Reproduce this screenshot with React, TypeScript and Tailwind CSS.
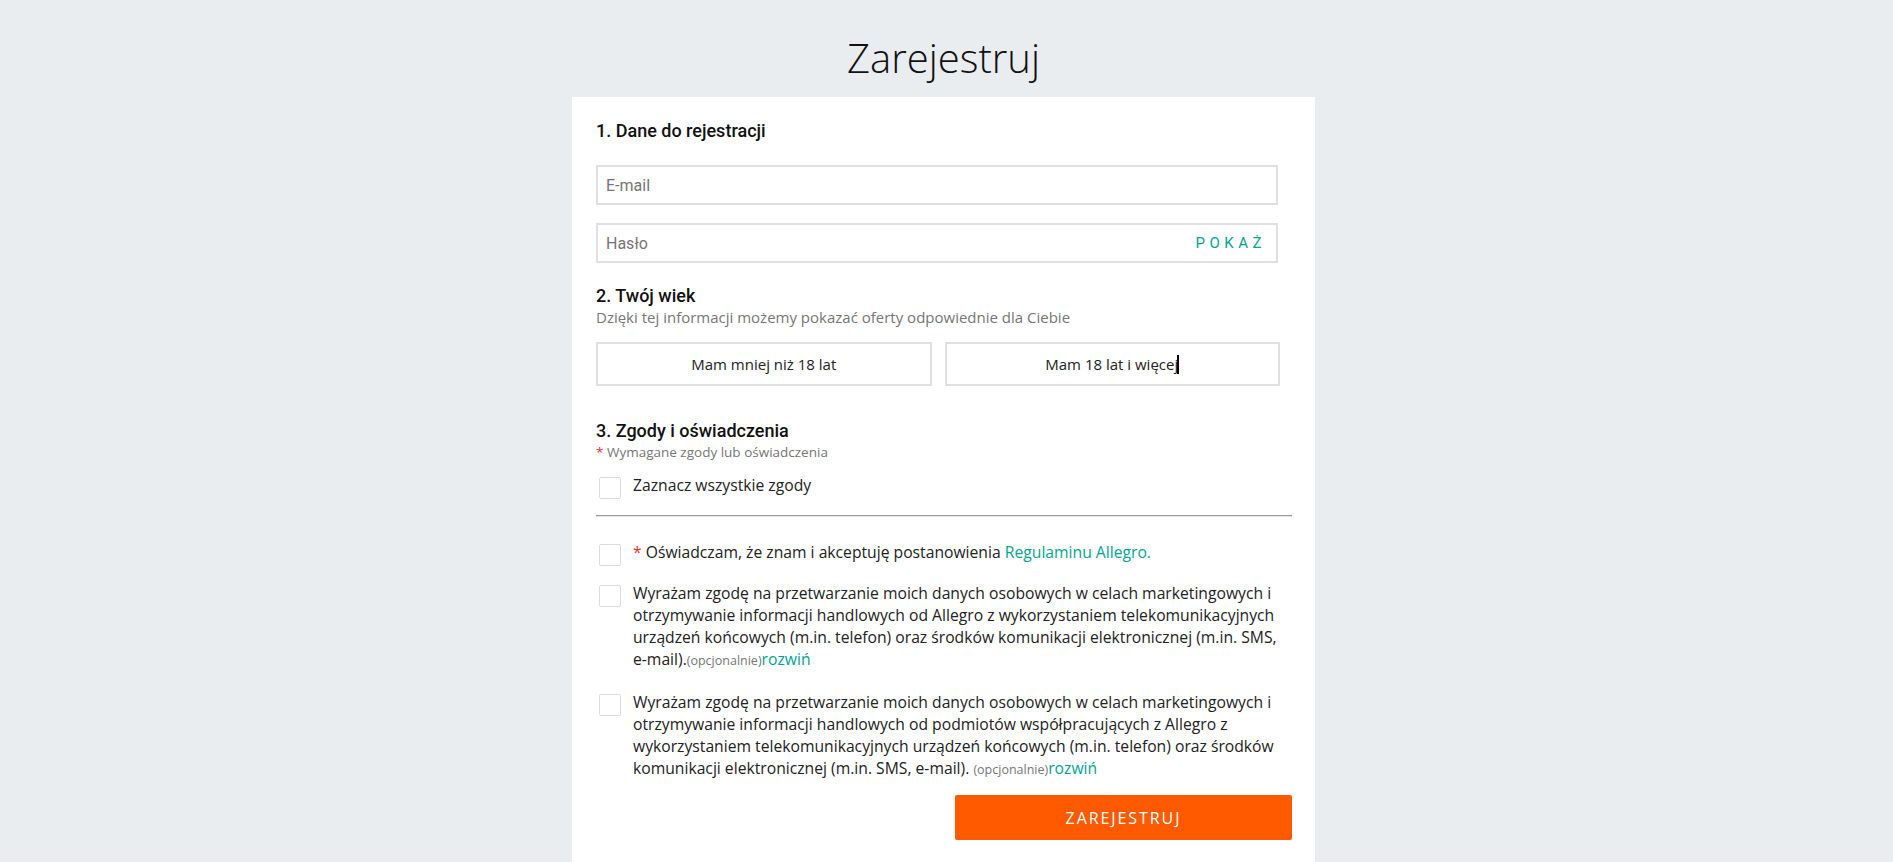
import React from "react";

const teal = "text-[#00a790]";

function Checkbox() {
  return <div className="-mb-[3px] mt-[3px] h-[22px] w-[22px] shrink-0 rounded-[2px] border border-[#dcdcdc] bg-white" />;
}

function ConsentRow({ children }: { children: React.ReactNode }) {
  return (
    <div className="flex items-start pl-[3px]">
      <Checkbox />
      <div className="ml-[12px] text-[15.7px] leading-[22px] text-[#222]">{children}</div>
    </div>
  );
}

export default function App() {
  return (
    <div
      className="min-h-screen bg-[#eaedf0] pr-[6px]"
      style={{ fontFamily: "'Open Sans', 'Noto Sans', sans-serif" }}
    >
      <h1 className="pt-[34px] text-center text-[40px] font-light leading-[48px] text-[#111]">Zarejestruj</h1>
      <div className="mx-auto mt-[15px] w-[743px] bg-white pb-[40px] pl-[24px] pr-[23px] pt-[22px]">
        {/* Section 1 */}
        <h2 className="text-[18px] font-medium leading-[24px] text-[#111]" style={{ fontFamily: "Roboto, sans-serif" }}>
          1. Dane do rejestracji
        </h2>
        <div className="mr-[14px] mt-[22px] flex flex-col gap-[18px]" style={{ fontFamily: "Roboto, sans-serif" }}>
          <input
            type="text"
            placeholder="E-mail"
            className="h-[40px] w-full border-2 border-[#e0e0e0] bg-white px-[8px] text-[16px] text-[#222] outline-none placeholder:text-[#757575]"
          />
          <div className="flex h-[40px] w-full items-center border-2 border-[#e0e0e0] bg-white pl-[8px] pr-[10px]">
            <input
              type="password"
              placeholder="Hasło"
              className="h-full flex-1 bg-transparent text-[16px] text-[#222] outline-none placeholder:text-[#757575]"
            />
            <span className={`text-[15px] tracking-[0.3em] ${teal}`}>POKAŻ</span>
          </div>
        </div>

        {/* Section 2 */}
        <h2 className="mt-[21px] text-[18px] font-medium leading-[24px] text-[#111]" style={{ fontFamily: "Roboto, sans-serif" }}>
          2. Twój wiek
        </h2>
        <p className="text-[15px] leading-[18px] text-[#767676]">
          Dzięki tej informacji możemy pokazać oferty odpowiednie dla Ciebie
        </p>
        <div className="mr-[12px] mt-[16px] grid grid-cols-2 gap-[13px]">
          <button className="flex h-[44px] items-center justify-center border-2 border-[#e0e0e0] bg-white text-[15px] text-[#222]">
            Mam mniej niż 18 lat
          </button>
          <button className="flex h-[44px] items-center justify-center border-2 border-[#e0e0e0] bg-white text-[15px] text-[#222]">
            Mam 18 lat i więcej
            <span className="ml-[-1px] inline-block h-[19px] w-[2px] bg-black" />
          </button>
        </div>

        {/* Section 3 */}
        <h2 className="mt-[33px] text-[18px] font-medium leading-[24px] text-[#111]" style={{ fontFamily: "Roboto, sans-serif" }}>
          3. Zgody i oświadczenia
        </h2>
        <p className="text-[13.5px] leading-[18px] text-[#767676]">
          <span className="text-[#ff2a2a]">*</span> Wymagane zgody lub oświadczenia
        </p>

        <div className="mt-[13px]">
          <ConsentRow>Zaznacz wszystkie zgody</ConsentRow>
        </div>
        <div className="mt-[19px] h-[2px] border-t border-[#999] bg-[#e6e6e6]" />

        <div className="mt-[24px] flex flex-col gap-[19px]">
          <ConsentRow>
            <span className="text-[#ff2a2a]">*</span> Oświadczam, że znam i akceptuję postanowienia{" "}
            <span className={teal}>Regulaminu Allegro.</span>
          </ConsentRow>
          <ConsentRow>
            Wyrażam zgodę na przetwarzanie moich danych osobowych w celach marketingowych i otrzymywanie informacji
            handlowych od Allegro z wykorzystaniem telekomunikacyjnych urządzeń końcowych (m.in. telefon) oraz środków
            komunikacji elektronicznej (m.in. SMS,{" "}
            <span className="whitespace-nowrap">
              e-mail).
              <span className="text-[12.5px] text-[#767676]">(opcjonalnie)</span>
              <span className={teal}>rozwiń</span>
            </span>
          </ConsentRow>
          <ConsentRow>
            Wyrażam zgodę na przetwarzanie moich danych osobowych w celach marketingowych i otrzymywanie informacji
            handlowych od podmiotów współpracujących z Allegro z wykorzystaniem telekomunikacyjnych urządzeń końcowych
            (m.in. telefon) oraz środków komunikacji elektronicznej (m.in. SMS,{" "}
            <span className="whitespace-nowrap">e-mail).</span>{" "}
            <span className="text-[12.5px] text-[#767676]">(opcjonalnie)</span>
            <span className={teal}>rozwiń</span>
          </ConsentRow>
        </div>

        <div className="mt-[14px] flex justify-end">
          <button className="h-[45px] w-[337px] rounded-[2px] bg-[#ff5a00] text-[16px] tracking-[0.12em] text-white">
            ZAREJESTRUJ
          </button>
        </div>
      </div>
    </div>
  );
}
